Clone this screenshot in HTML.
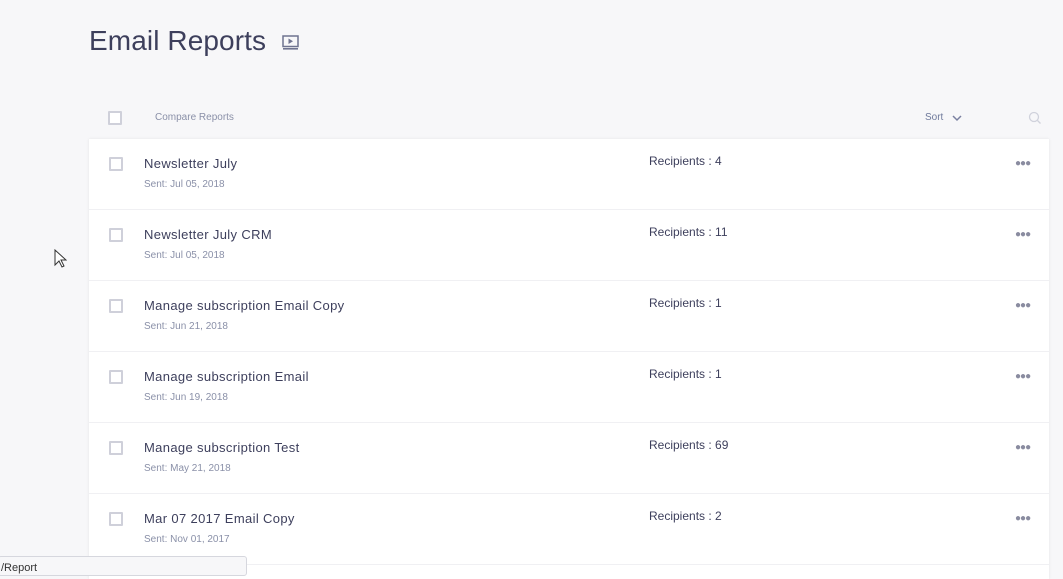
<!DOCTYPE html>
<html><head><style>
*{margin:0;padding:0;box-sizing:border-box}
body{width:1063px;height:567px;overflow:hidden;background:#f7f7f9;font-family:"Liberation Sans",sans-serif;position:relative}
h1{position:absolute;left:89px;top:25px;font-weight:400;font-size:28px;color:#3d3f5c;letter-spacing:0.1px}
.cb{position:absolute;width:14px;height:14px;border:2px solid #cfd0da;border-radius:1px;background:#fff}
.card{position:absolute;left:89px;top:139px;width:960px;height:440px;background:#fff;box-shadow:0 0 3px rgba(0,0,0,0.08)}
.row{position:absolute;left:0;width:960px;height:71px;border-bottom:1px solid #f0f0f3}
.t{position:absolute;left:55px;top:17px;font-size:13px;color:#3d3f5c;letter-spacing:0.35px}
.s{position:absolute;left:55px;top:40px;font-size:10px;color:#8a90a8}
.r{position:absolute;left:560px;top:15px;font-size:12px;color:#3d3f5c}
.d{position:absolute;left:926px;top:19px;font-size:10px;color:#8a8ca0;letter-spacing:-1px}
</style></head><body>
<h1>Email Reports</h1>
<svg style="position:absolute;left:282px;top:35px" width="17" height="16" viewBox="0 0 17 16"><rect x="1" y="1" width="15" height="10.5" fill="none" stroke="#6f7390" stroke-width="1.5"/><path d="M6.5 3.5L11 6.2 6.5 9Z" fill="#6f7390"/><rect x="1" y="13" width="15" height="1.6" fill="#6f7390"/></svg>
<div class="cb" style="left:108px;top:111px"></div>
<div style="position:absolute;left:155px;top:112px;font-size:10px;color:#8a90a8">Compare Reports</div>
<div style="position:absolute;left:925px;top:112px;font-size:10px;color:#6f7a9c">Sort</div>
<svg style="position:absolute;left:952px;top:114px" width="10" height="8"><path d="M1 2l4 4 4-4" fill="none" stroke="#7a80a0" stroke-width="1.5"/></svg>
<svg style="position:absolute;left:1028px;top:111px" width="14" height="14"><circle cx="6" cy="6" r="4.5" fill="none" stroke="#d0d2dc" stroke-width="1.3"/><path d="M9.5 9.5l3 3" stroke="#d0d2dc" stroke-width="1.3"/></svg>
<div class="card">
<div class="row" style="top:0"><div class="cb" style="left:20px;top:18px"></div><div class="t">Newsletter July</div><div class="s">Sent: Jul 05, 2018</div><div class="r">Recipients : 4</div><div class="d">●●●</div></div>
<div class="row" style="top:71px"><div class="cb" style="left:20px;top:18px"></div><div class="t">Newsletter July CRM</div><div class="s">Sent: Jul 05, 2018</div><div class="r">Recipients : 11</div><div class="d">●●●</div></div>
<div class="row" style="top:142px"><div class="cb" style="left:20px;top:18px"></div><div class="t">Manage subscription Email Copy</div><div class="s">Sent: Jun 21, 2018</div><div class="r">Recipients : 1</div><div class="d">●●●</div></div>
<div class="row" style="top:213px"><div class="cb" style="left:20px;top:18px"></div><div class="t">Manage subscription Email</div><div class="s">Sent: Jun 19, 2018</div><div class="r">Recipients : 1</div><div class="d">●●●</div></div>
<div class="row" style="top:284px"><div class="cb" style="left:20px;top:18px"></div><div class="t">Manage subscription Test</div><div class="s">Sent: May 21, 2018</div><div class="r">Recipients : 69</div><div class="d">●●●</div></div>
<div class="row" style="top:355px"><div class="cb" style="left:20px;top:18px"></div><div class="t">Mar 07 2017 Email Copy</div><div class="s">Sent: Nov 01, 2017</div><div class="r">Recipients : 2</div><div class="d">●●●</div></div>
</div>
<svg style="position:absolute;left:54px;top:249px" width="13" height="20"><path d="M1 1v15l4-4 3 6 2-1-3-6h5z" fill="#fff" stroke="#333" stroke-width="1"/></svg>
<div style="position:absolute;left:-2px;top:556px;width:249px;height:20px;background:#f7f7f9;border:1px solid #d6d7de;border-radius:3px;font-size:11px;color:#333;padding:5px 0 0 2px">/Report</div>
</body></html>
